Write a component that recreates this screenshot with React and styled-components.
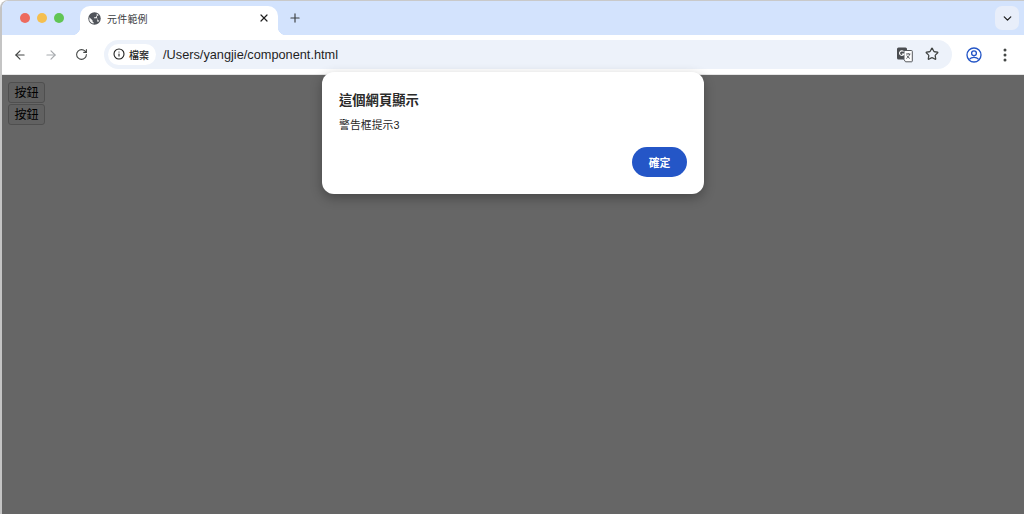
import React from "react";
import styled, { createGlobalStyle } from "styled-components";
import { ArrowLeft, ArrowRight, RotateCw, Plus, X, ChevronDown, Info, Star } from "lucide-react";

const cjk = `"Liberation Sans", "Noto Sans CJK TC", sans-serif`;

const Global = createGlobalStyle`
  html, body { margin: 0; padding: 0; background: #fff; }
  body { font-family: ${cjk}; overflow: hidden; }
  * { box-sizing: border-box; }
`;

const Window = styled.div`
  position: relative;
  width: 1024px;
  height: 514px;
  display: flex;
  flex-direction: column;
  background: #fff;
  border-left: 2px solid #c4c4c4;
  border-top: 1px solid #c9c9c9;
  border-top-left-radius: 8px;
  overflow: hidden;
`;

const TabStrip = styled.div`
  height: 34px;
  flex: none;
  display: flex;
  align-items: flex-end;
  background: #d3e3fd;
  padding: 0 16px 0 18px;
`;

const Lights = styled.div`
  display: flex;
  gap: 7px;
  align-self: flex-start;
  margin-top: 12px;
  width: 60px;
`;

const Light = styled.span`
  width: 10px;
  height: 10px;
  border-radius: 50%;
  background: ${(p) => p.$c};
`;

const Tab = styled.div`
  position: relative;
  width: 198px;
  height: 29px;
  background: #fff;
  border-radius: 10px 10px 0 0;
  display: flex;
  align-items: center;
  padding: 0 8px 5px 8px;
  gap: 6px;
  color: #3c4043;
  font-size: 10px;
  &::before, &::after {
    content: "";
    position: absolute;
    bottom: 0;
    width: 8px;
    height: 8px;
  }
  &::before { left: -8px; background: radial-gradient(circle at 0 0, transparent 8px, #fff 8.5px); }
  &::after { right: -8px; background: radial-gradient(circle at 100% 0, transparent 8px, #fff 8.5px); }
`;

const TabTitle = styled.span`
  flex: 1;
  letter-spacing: 0.2px;
`;

const NewTab = styled.div`
  display: flex;
  align-items: center;
  margin-left: 10px;
  height: 29px;
  padding-bottom: 5px;
  color: #3c4043;
`;

const Spacer = styled.div`
  flex: 1;
`;

const TabSearch = styled.div`
  width: 24px;
  height: 24px;
  align-self: flex-start;
  margin-top: 5px;
  margin-right: -11px;
  border-radius: 7px;
  background: #e8eefa;
  display: flex;
  align-items: center;
  justify-content: center;
  color: #1f1f1f;
`;

const Toolbar = styled.div`
  height: 40px;
  flex: none;
  display: flex;
  align-items: center;
  background: #fff;
  padding: 0 0 0 11px;
  border-bottom: 1px solid #e6e6e6;
`;

const NavGroup = styled.div`
  display: flex;
  align-items: center;
  gap: 17px;
  width: 91px;
`;

const NavIcon = styled.span`
  display: flex;
  color: ${(p) => (p.$off ? "#a8abaf" : "#444746")};
`;

const Omnibox = styled.div`
  width: 848px;
  height: 29px;
  margin-bottom: 1px;
  border-radius: 15px;
  background: #edf2fa;
  display: flex;
  align-items: center;
  padding: 0 13px 0 4px;
`;

const Chip = styled.div`
  width: 48px;
  height: 21px;
  border-radius: 11px;
  background: #fff;
  display: flex;
  align-items: center;
  gap: 4px;
  padding-left: 5px;
  font-size: 10px;
  font-weight: 500;
  color: #1f1f1f;
`;

const Url = styled.span`
  flex: 1;
  margin-left: 7px;
  font-size: 12.75px;
  color: #1f1f1f;
`;

const OmniIcons = styled.div`
  display: flex;
  align-items: center;
  gap: 12px;
  color: #444746;
`;

const ProfileArea = styled.div`
  display: flex;
  align-items: center;
  gap: 16px;
  margin-left: 14px;
  color: #444746;
`;

const Page = styled.div`
  flex: 1;
  background: #666;
  padding: 7px 6px;
  display: flex;
  flex-direction: column;
  align-items: flex-start;
  gap: 1px;
`;

const PageButton = styled.button`
  width: 37px;
  height: 21px;
  padding: 0;
  border: 1px solid #4f4f4f;
  border-radius: 3px;
  background: #616161;
  color: #000;
  font-family: ${cjk};
  font-size: 12px;
  line-height: 1;
`;

const Dialog = styled.div`
  position: absolute;
  left: 320px;
  top: 71px;
  width: 382px;
  height: 122px;
  background: #fff;
  border-radius: 12px;
  padding: 19px 17px 17px;
  display: flex;
  flex-direction: column;
  box-shadow: 0 4px 12px rgba(0, 0, 0, 0.3);
`;

const DialogTitle = styled.div`
  font-size: 13.3px;
  font-weight: 700;
  line-height: 20px;
  color: #2a2a2a;
`;

const DialogText = styled.div`
  margin-top: 5px;
  font-size: 10.8px;
  line-height: 18px;
  color: #1f1f1f;
  letter-spacing: 0.1px;
`;

const DialogActions = styled.div`
  margin-top: auto;
  display: flex;
  justify-content: flex-end;
`;

const OkButton = styled.button`
  width: 55px;
  height: 30px;
  border: 0;
  border-radius: 15px;
  background: #2456c7;
  color: #fff;
  font-family: ${cjk};
  font-size: 10.8px;
  font-weight: 700;
`;

const GlobeIcon = () => (
  <svg width="13" height="13" viewBox="0 0 24 24">
    <circle cx="12" cy="12" r="11.500" fill="#50545a" />
    <path d="M2.500 9.500l6 6v1.500c0 1.100.9 2 2 2v2.400C6.800 21 3.700 18.500 2.500 15ZM16 3c1.300.6 2.500 1.500 3.500 2.600l-1 1.400h-3l-1 2.500h-3l-.5 2h5.500c.6 0 1 .4 1 1v2.500h1.500c.8 0 1.500.5 1.800 1.200l-1.800 2-2-.7" fill="#fff" opacity="0.95" />
  </svg>
);

const TranslateIcon = () => (
  <svg width="17" height="17" viewBox="0 0 17 17">
    <rect x="1" y="1.500" width="10" height="12" rx="1.500" fill="#4a4d51" />
    <path d="M8 4.500h7.500a.8.8 0 0 1 .8.8V15a.8.8 0 0 1-.8.8H9.500L8 13.500Z" fill="#fff" stroke="#55585c" strokeWidth="1" />
    <path d="M7.500 5.500A2.300 2.300 0 1 0 8 8H5.800" fill="none" stroke="#fff" strokeWidth="1.100" />
    <path d="M10 8h4.500M12.200 7v1M13.700 8c-.5 2-1.700 3.500-3.400 4.500M10.800 9.500c.6 1.300 1.700 2.400 3.100 3" fill="none" stroke="#55585c" strokeWidth="0.900" />
  </svg>
);

const AccountIcon = () => (
  <svg width="16" height="16" viewBox="0 0 24 24" fill="none" stroke="#2456c7" strokeWidth="2">
    <circle cx="12" cy="12" r="10.500" />
    <circle cx="12" cy="9.500" r="3.600" />
    <path d="M5 18.500c2-2.400 4.400-3 7-3s5 .6 7 3" />
  </svg>
);

const MoreIcon = () => (
  <svg width="14" height="16" viewBox="0 0 14 16" fill="#444746">
    <circle cx="7" cy="3" r="1.500" />
    <circle cx="7" cy="8" r="1.500" />
    <circle cx="7" cy="13" r="1.500" />
  </svg>
);

export default function App() {
  return (
    <>
      <Global />
      <Window>
        <TabStrip>
          <Lights>
            <Light $c="#ed6a5e" />
            <Light $c="#f5bf4f" />
            <Light $c="#61c554" />
          </Lights>
          <Tab>
            <GlobeIcon />
            <TabTitle>元件範例</TabTitle>
            <X size={12} strokeWidth={2.4} color="#1f1f1f" />
          </Tab>
          <NewTab>
            <Plus size={14} strokeWidth={2} />
          </NewTab>
          <Spacer />
          <TabSearch>
            <ChevronDown size={13} strokeWidth={2.4} />
          </TabSearch>
        </TabStrip>
        <Toolbar>
          <NavGroup>
            <NavIcon><ArrowLeft size={14} strokeWidth={2} /></NavIcon>
            <NavIcon $off><ArrowRight size={14} strokeWidth={2} /></NavIcon>
            <NavIcon><RotateCw size={13} strokeWidth={2} /></NavIcon>
          </NavGroup>
          <Omnibox>
            <Chip>
              <Info size={12} strokeWidth={2.2} color="#1f1f1f" />
              <span>檔案</span>
            </Chip>
            <Url>/Users/yangjie/component.html</Url>
            <OmniIcons>
              <TranslateIcon />
              <Star size={14} strokeWidth={2.2} />
            </OmniIcons>
          </Omnibox>
          <ProfileArea>
            <AccountIcon />
            <MoreIcon />
          </ProfileArea>
        </Toolbar>
        <Page>
          <PageButton>按鈕</PageButton>
          <PageButton>按鈕</PageButton>
        </Page>
        <Dialog>
          <DialogTitle>這個網頁顯示</DialogTitle>
          <DialogText>警告框提示3</DialogText>
          <DialogActions>
            <OkButton>確定</OkButton>
          </DialogActions>
        </Dialog>
      </Window>
    </>
  );
}
